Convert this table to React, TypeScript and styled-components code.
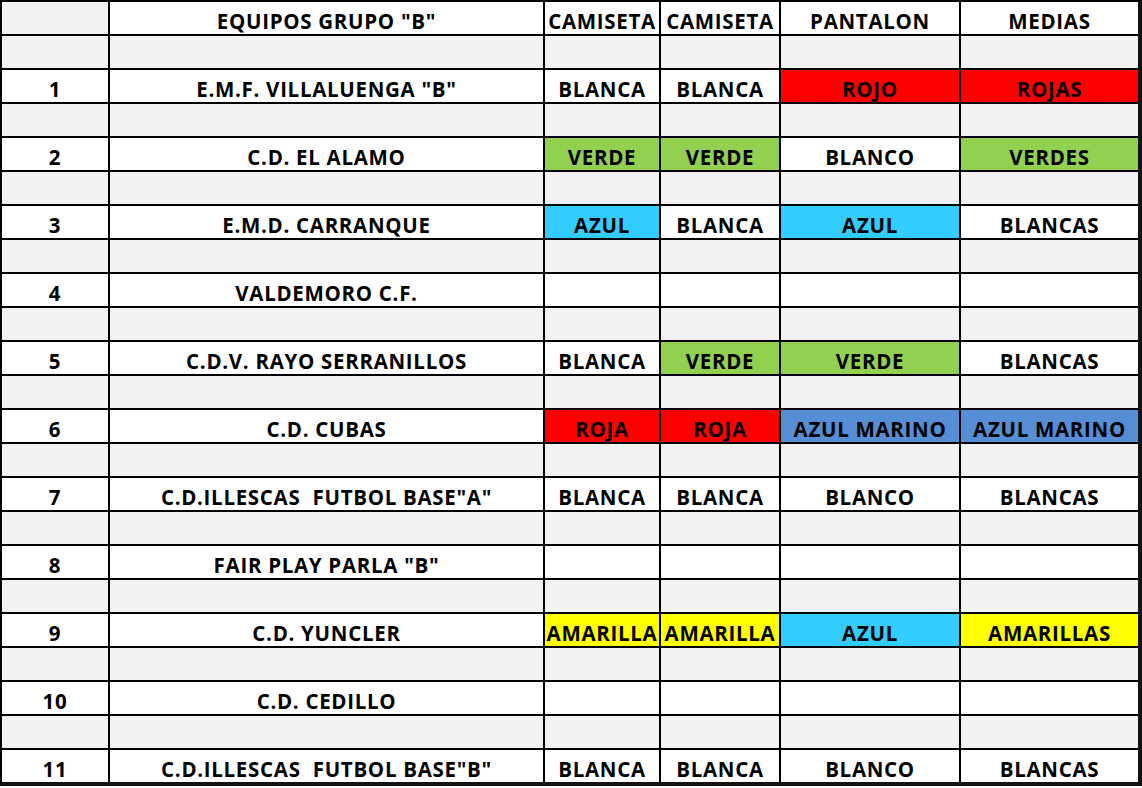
import styled, { createGlobalStyle } from "styled-components";

const GlobalStyle = createGlobalStyle`
  html, body {
    margin: 0;
    padding: 0;
    background: #ffffff;
  }
  body {
    font-family: "Open Sans", "Noto Sans", "Liberation Sans", sans-serif;
  }
`;

const colors = {
  white: "#ffffff",
  gray: "#f2f2f2",
  red: "#ff0000",
  green: "#92d050",
  cyan: "#33ccff",
  navy: "#558ed5",
  yellow: "#ffff00",
};

type Tone = keyof typeof colors;

const Sheet = styled.div`
  display: grid;
  grid-template-columns: 106px 433px 114px 118px 178px 177px;
  grid-auto-rows: 32px;
  gap: 2px;
  width: fit-content;
  background: #000000;
  border-top: 2px solid #000000;
  border-left: 2px solid #000000;
  border-right: 4px solid #111111;
  border-bottom: 4px solid #111111;
`;

const Cell = styled.div<{ $tone: Tone }>`
  display: flex;
  align-items: flex-end;
  justify-content: center;
  background: ${(p) => colors[p.$tone]};
  color: #000000;
  font-weight: 700;
  font-size: 20.5px;
  line-height: 26px;
  white-space: pre;
  overflow: hidden;
  letter-spacing: 0.7px;
`;

type Team = {
  name: string;
  kit: [string, Tone][];
};

const teams: Team[] = [
  { name: 'E.M.F. VILLALUENGA "B"', kit: [["BLANCA", "white"], ["BLANCA", "white"], ["ROJO", "red"], ["ROJAS", "red"]] },
  { name: "C.D. EL ALAMO", kit: [["VERDE", "green"], ["VERDE", "green"], ["BLANCO", "white"], ["VERDES", "green"]] },
  { name: "E.M.D. CARRANQUE", kit: [["AZUL", "cyan"], ["BLANCA", "white"], ["AZUL", "cyan"], ["BLANCAS", "white"]] },
  { name: "VALDEMORO C.F.", kit: [["", "white"], ["", "white"], ["", "white"], ["", "white"]] },
  { name: "C.D.V. RAYO SERRANILLOS", kit: [["BLANCA", "white"], ["VERDE", "green"], ["VERDE", "green"], ["BLANCAS", "white"]] },
  { name: "C.D. CUBAS", kit: [["ROJA", "red"], ["ROJA", "red"], ["AZUL MARINO", "navy"], ["AZUL MARINO", "navy"]] },
  { name: 'C.D.ILLESCAS  FUTBOL BASE"A"', kit: [["BLANCA", "white"], ["BLANCA", "white"], ["BLANCO", "white"], ["BLANCAS", "white"]] },
  { name: 'FAIR PLAY PARLA "B"', kit: [["", "white"], ["", "white"], ["", "white"], ["", "white"]] },
  { name: "C.D. YUNCLER", kit: [["AMARILLA", "yellow"], ["AMARILLA", "yellow"], ["AZUL", "cyan"], ["AMARILLAS", "yellow"]] },
  { name: "C.D. CEDILLO", kit: [["", "white"], ["", "white"], ["", "white"], ["", "white"]] },
  { name: 'C.D.ILLESCAS  FUTBOL BASE"B"', kit: [["BLANCA", "white"], ["BLANCA", "white"], ["BLANCO", "white"], ["BLANCAS", "white"]] },
];

const headers = ['EQUIPOS GRUPO "B"', "CAMISETA", "CAMISETA", "PANTALON", "MEDIAS"];

function SpacerRow({ row }: { row: number }) {
  return (
    <>
      {Array.from({ length: 6 }, (_, i) => (
        <Cell key={`s${row}-${i}`} $tone="gray" />
      ))}
    </>
  );
}

function TeamRows({ team, index }: { team: Team; index: number }) {
  return (
    <>
      <SpacerRow row={index} />
      <Cell $tone="white">{index}</Cell>
      <Cell $tone="white">{team.name}</Cell>
      {team.kit.map(([label, tone], i) => (
        <Cell key={i} $tone={tone}>{label}</Cell>
      ))}
    </>
  );
}

export default function App() {
  return (
    <>
      <GlobalStyle />
      <Sheet>
        <Cell $tone="gray" />
        {headers.map((h, i) => (
          <Cell key={`h${i}`} $tone="white">{h}</Cell>
        ))}
        {teams.map((team, idx) => (
          <TeamRows key={team.name} team={team} index={idx + 1} />
        ))}
      </Sheet>
    </>
  );
}
